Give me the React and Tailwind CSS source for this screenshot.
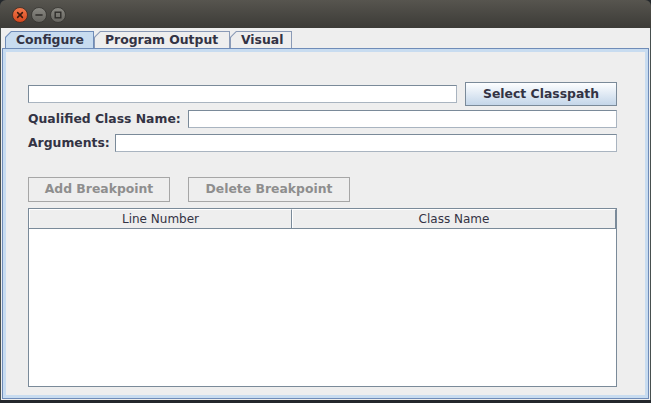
import React from "react";

const font = { fontFamily: '"DejaVu Sans", Verdana, sans-serif' };

function TitleButtons() {
  return (
    <div className="flex items-center gap-[3px] pl-[12px] pt-[1px]">
      <svg width="16" height="16" viewBox="0 0 16 16">
        <defs>
          <linearGradient id="cg" x1="0" y1="0" x2="0" y2="1">
            <stop offset="0" stopColor="#f47a4c" />
            <stop offset="1" stopColor="#d4461d" />
          </linearGradient>
        </defs>
        <circle cx="8" cy="8" r="7.5" fill="url(#cg)" stroke="#3a2a22" strokeWidth="0.8" />
        <path d="M5.6 5.6 L10.4 10.4 M10.4 5.6 L5.6 10.4" stroke="#3b1a0e" strokeWidth="1.5" strokeLinecap="round" />
      </svg>
      <svg width="16" height="16" viewBox="0 0 16 16">
        <defs>
          <linearGradient id="gg" x1="0" y1="0" x2="0" y2="1">
            <stop offset="0" stopColor="#8a8983" />
            <stop offset="1" stopColor="#64635e" />
          </linearGradient>
        </defs>
        <circle cx="8" cy="8" r="7.5" fill="url(#gg)" stroke="#33322e" strokeWidth="0.8" />
        <path d="M5 8 L11 8" stroke="#2e2d2a" strokeWidth="1.6" strokeLinecap="round" />
      </svg>
      <svg width="16" height="16" viewBox="0 0 16 16">
        <circle cx="8" cy="8" r="7.5" fill="url(#gg)" stroke="#33322e" strokeWidth="0.8" />
        <rect x="5.2" y="5.2" width="5.6" height="5.6" fill="none" stroke="#2e2d2a" strokeWidth="1.4" />
      </svg>
    </div>
  );
}

function Tab({ label, selected, w }) {
  return (
    <div
      className={`h-[17px] pt-[1px] px-[1px] ${selected ? "bg-[#6f8cb8]" : "bg-[#8a9ab6]"} [clip-path:polygon(6px_0,100%_0,100%_100%,0_100%,0_6px)]`}
      style={{ width: w }}
    >
      <div
        className={`h-full flex items-center pl-[10px] text-[12.4px] font-bold text-[#333344] ${selected ? "bg-[#c8dcf0]" : "bg-[#eeeeee]"} [clip-path:polygon(5.5px_0,100%_0,100%_100%,0_100%,0_5.5px)]`}
      >
        {label}
      </div>
    </div>
  );
}

function TextField({ className = "" }) {
  return <div className={`h-[18px] bg-white border border-[#7a8a99] border-b-[#a9b4c0] border-r-[#a9b4c0] ${className}`} />;
}

export default function App() {
  return (
    <div className="w-[651px] h-[403px] bg-[#24282c] flex flex-col overflow-hidden" style={font}>
      <div className="h-[28px] shrink-0 rounded-t-[6px] bg-gradient-to-b from-[#57554f] to-[#3c3b37] flex items-center">
        <TitleButtons />
      </div>
      <div className="h-[372px] shrink-0 bg-[#eeeeee] border-x border-[#48504f] flex flex-col px-[1px] pt-[3px] pb-[1px]">
        <div className="flex pl-[3px] h-[17px] shrink-0">
          <Tab label="Configure" selected w={89} />
          <Tab label="Program Output" w={136} />
          <Tab label="Visual" w={62} />
        </div>
        <div className="flex-1 border border-[#6f8cb8] flex flex-col">
          <div className="flex-1 border-[3px] border-[#c8dcf0] flex flex-col pl-[22px] pr-[28px] pt-[30px] pb-[8px]">
            <div className="flex items-center gap-[8px] h-[24px]">
              <TextField className="flex-1" />
              <button className="w-[152px] h-[24px] border border-[#7a8a99] bg-gradient-to-b from-[#fdfeff] to-[#c4d6e9] text-[12.4px] font-bold text-[#333344]">
                Select Classpath
              </button>
            </div>
            <div className="flex items-center mt-[4px] h-[18px]">
              <div className="w-[160px] shrink-0 text-[12.4px] font-bold text-[#333344] whitespace-nowrap">
                Qualified Class Name:
              </div>
              <TextField className="flex-1" />
            </div>
            <div className="flex items-center mt-[6px] h-[18px]">
              <div className="w-[87px] shrink-0 text-[12.4px] font-bold text-[#333344] whitespace-nowrap">
                Arguments:
              </div>
              <TextField className="flex-1" />
            </div>
            <div className="flex gap-[18px] mt-[25px]">
              <button className="w-[142px] h-[25px] border border-[#a6a6a6] bg-[#eeeeee] text-[12.4px] font-bold text-[#8e8e8e]">
                Add Breakpoint
              </button>
              <button className="w-[162px] h-[25px] border border-[#a6a6a6] bg-[#eeeeee] text-[12.4px] font-bold text-[#8e8e8e]">
                Delete Breakpoint
              </button>
            </div>
            <div className="mt-[6px] flex-1 border border-[#7a8a99] bg-white flex flex-col">
              <div className="h-[20px] flex bg-[#eeeeee] border-b border-[#7a8a99] text-[12px] text-[#333344]">
                <div className="w-[263px] flex items-center justify-center border-r border-[#7a8a99] border-l border-l-white border-t border-t-white">
                  Line Number
                </div>
                <div className="flex-1 flex items-center justify-center border-l border-l-white border-t border-t-white border-r border-r-[#7a8a99]">
                  Class Name
                </div>
              </div>
              <div className="flex-1 bg-white" />
            </div>
          </div>
        </div>
      </div>
    </div>
  );
}
